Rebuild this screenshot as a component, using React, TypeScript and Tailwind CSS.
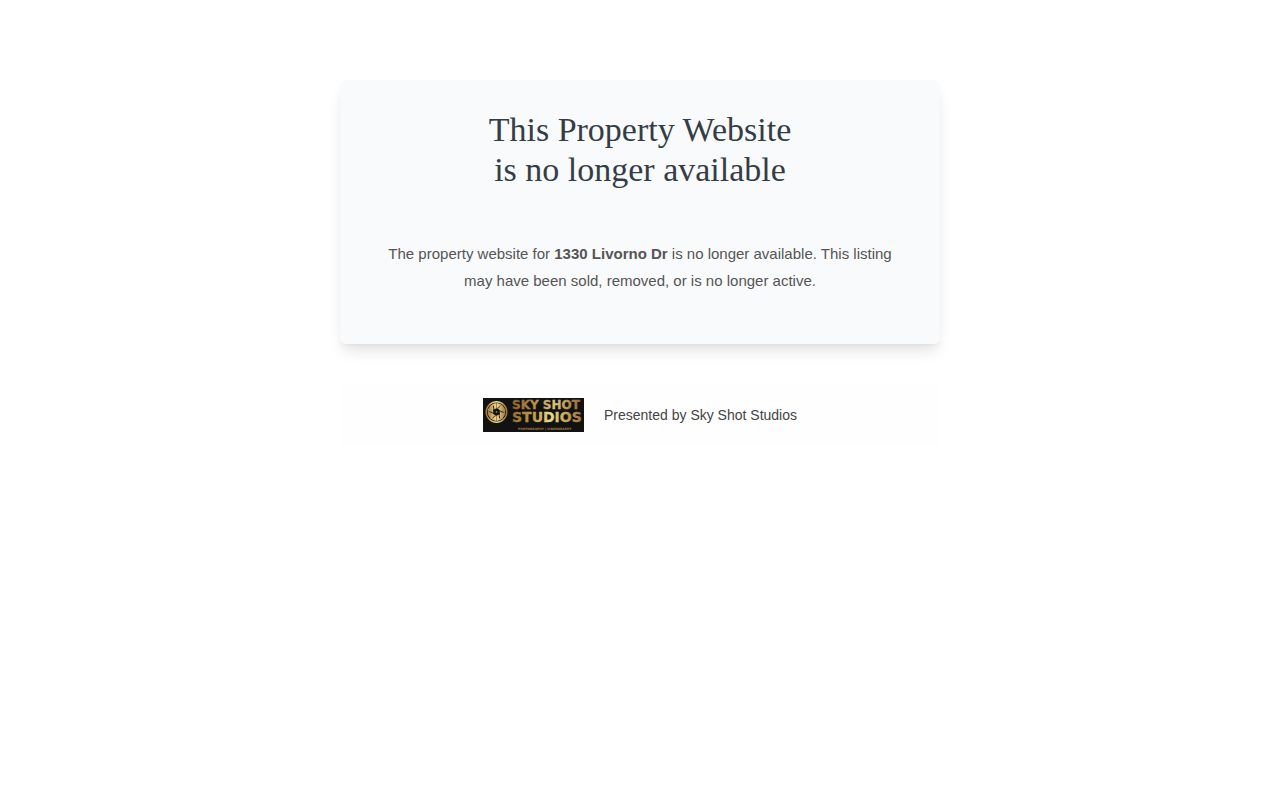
const property = {
  address: '1330 Livorno Dr',
  agency: 'Sky Shot Studios',
}

function StudioLogo() {
  return (
    <svg
      viewBox="0 0 101 34"
      role="img"
      aria-label="Sky Shot Studios logo"
      className="h-[34px] w-[101px] shrink-0"
    >
      <defs>
        <linearGradient id="gold-top" gradientUnits="userSpaceOnUse" x1="28" y1="0" x2="100" y2="0">
          <stop offset="0" stopColor="#8f6129" />
          <stop offset="0.3" stopColor="#b58c45" />
          <stop offset="0.62" stopColor="#dcc67c" />
          <stop offset="0.8" stopColor="#b88f4a" />
          <stop offset="1" stopColor="#94672f" />
        </linearGradient>
        <linearGradient id="gold-bottom" gradientUnits="userSpaceOnUse" x1="28" y1="0" x2="100" y2="0">
          <stop offset="0" stopColor="#98692d" />
          <stop offset="0.35" stopColor="#c7a255" />
          <stop offset="0.55" stopColor="#e9dc8c" />
          <stop offset="0.75" stopColor="#c9a65a" />
          <stop offset="1" stopColor="#a0713a" />
        </linearGradient>
        <linearGradient id="gold-lens" x1="0" y1="0" x2="1" y2="0">
          <stop offset="0" stopColor="#a3783c" />
          <stop offset="0.5" stopColor="#f0dd92" />
          <stop offset="1" stopColor="#a3783c" />
        </linearGradient>
      </defs>
      <rect width="101" height="34" fill="#131212" />

      {/* lens with shutter blades */}
      <circle cx="13.5" cy="14" r="10.3" fill="none" stroke="url(#gold-lens)" strokeWidth="1.4" />
      <circle cx="13.5" cy="14" r="8.9" fill="url(#gold-lens)" />
      <g fill="none" stroke="#131212" strokeWidth="0.8">
        {[0, 60, 120, 180, 240, 300].map((angle) => (
          <path key={angle} d="M12.5 11 Q15.5 10.4 17.4 8" transform={`rotate(${angle} 13.5 14)`} />
        ))}
      </g>
      <path d="M13.5 5v5M13.5 18v5" stroke="#6b4c22" strokeWidth="0.6" />
      <circle cx="13.5" cy="14" r="3.3" fill="#131212" />
      <circle cx="13.5" cy="14" r="0.9" fill="#a3783c" />

      <g fontFamily="'DejaVu Sans', sans-serif" fontWeight="700">
        <text x="29" y="11" fontSize="12" fill="url(#gold-top)" stroke="url(#gold-top)" strokeWidth="0.3">
          SKY SHOT
        </text>
        <text x="29" y="24" fontSize="14" fill="url(#gold-bottom)" stroke="url(#gold-bottom)" strokeWidth="0.3">
          STUDIOS
        </text>
        <text x="35" y="32" fontSize="3" fill="#a27d42">PHOTOGRAPHY | VIDEOGRAPHY</text>
      </g>
    </svg>
  )
}

export default function App() {
  return (
    <div className="min-h-screen bg-white px-5 py-20 font-['Liberation_Sans',Arial,sans-serif]">
      <main className="mx-auto max-w-[600px] rounded-md bg-[#f9fafc] px-10 pt-[30px] pb-[50px] text-center shadow-[0_10px_15px_-3px_rgba(0,0,0,0.1),0_4px_6px_-2px_rgba(0,0,0,0.05)]">
        <h1 className="mb-[50px] font-['Liberation_Serif','Times_New_Roman',serif] text-[34px] leading-10 text-[#343d46]">
          This Property Website
          <br />
          is no longer available
        </h1>
        <p className="text-[15px] leading-[27px] text-[#555555]">
          The property website for <strong>{property.address}</strong> is no longer available. This listing may have
          been sold, removed, or is no longer active.
        </p>
      </main>

      <footer className="mx-auto mt-10 flex max-w-[600px] items-center justify-center gap-5 bg-[#fefefe] py-[14px] text-sm text-[#444444]">
        <StudioLogo />
        <span>Presented by {property.agency}</span>
      </footer>
    </div>
  )
}
